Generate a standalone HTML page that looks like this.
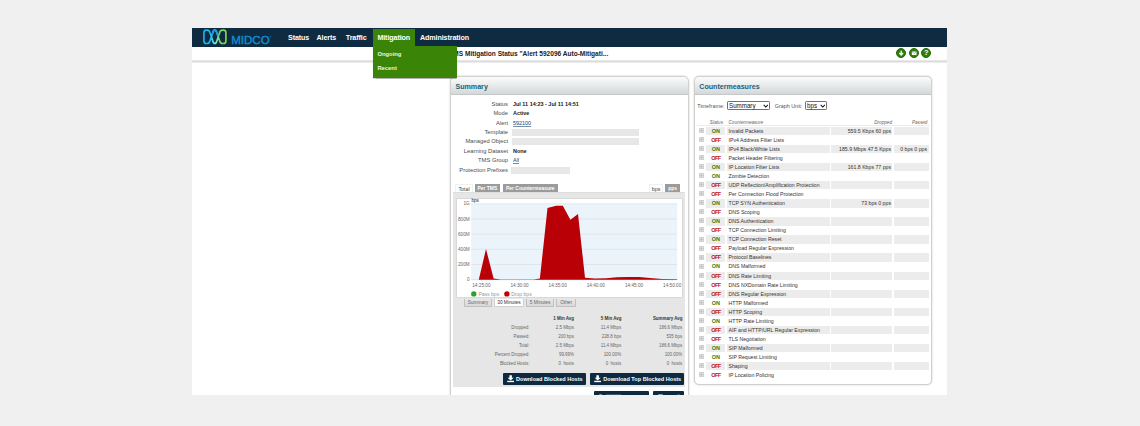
<!DOCTYPE html>
<html><head><meta charset="utf-8"><title>Mitigation Status</title>
<style>
*{box-sizing:border-box;margin:0;padding:0}
html,body{width:1140px;height:426px;overflow:hidden;background:#f0f0f0;font-family:"Liberation Sans",sans-serif;}
div,span,b,i,a{position:absolute;white-space:nowrap;font-style:normal;font-weight:normal}
#page{left:192px;top:28px;width:755px;height:367px;background:#fff}
#clip{left:0;top:0;width:1140px;height:395px;overflow:hidden}
#nav{left:192px;top:28px;width:755px;height:18.7px;background:#0e2b41}
.nv{z-index:6;top:28px;height:18px;line-height:20.2px;color:#fff;font-size:7.15px;font-weight:bold;letter-spacing:-0.1px}
#mit{z-index:5;left:373px;top:29px;width:42px;height:18px;background:#3a8507}
#dd{z-index:5;left:373px;top:46px;width:84px;height:31.5px;background:#3a8507;box-shadow:0 0.5px 1px rgba(0,0,0,.3)}
.ddi{z-index:6;left:377.4px;color:#e8f5e0;font-size:5.85px;font-weight:bold;line-height:8px}
#hr{left:192px;top:60px;width:755px;height:2.5px;background:linear-gradient(#ececec,#dcdcdc 50%,#f4f4f4)}
#title{left:456px;top:47px;height:13px;line-height:13px;font-size:6.55px;font-weight:bold;color:#222}
.ic{top:48.1px;width:10.1px;height:10.1px;border-radius:50%;background:#2f7d0d;border:1px solid #246a06}
.panel{border:1px solid #d0d0d0;border-radius:6px 6px 4px 4px;background:#fff;box-shadow:0 0 2px rgba(0,0,0,.22)}
.ph{left:0;top:0;right:0;height:17.9px;border-radius:5px 5px 0 0;background:linear-gradient(#fbfbfb,#eef0f0 35%,#d4d8d8);border-bottom:1px solid #c4c8c8}
.pt{left:4.5px;top:0;line-height:20.8px;font-size:7.1px;font-weight:bold;color:#1d5f7a}
.lbl{text-align:right;font-size:5.8px;color:#4c4c4c;line-height:9px;height:9px}
.val{left:513px;font-size:5.45px;font-weight:bold;color:#1a1a1a;line-height:9px;height:9px}
.blk{background:#e7e7e7;height:7.2px}
a.lk{color:#17446f;text-decoration:underline;text-decoration-thickness:0.45px;text-decoration-color:rgba(23,68,111,.6);text-underline-offset:0.6px;position:static}
.tab{top:184.4px;height:7.8px;line-height:8px;font-size:4.95px;font-weight:bold;text-align:center;color:#fff;background:#9b9b9b;border:0.5px solid #9b9b9b;border-bottom:none}
.tab.w{background:#fff;color:#444;border-color:#f0f0f0;font-weight:normal;font-size:5.3px}
#garea{left:453px;top:192px;width:231.6px;height:195.3px;background:#e6e6e6;border-top:1px solid #dedede}
#chart{left:456.3px;top:198px;width:226.4px;height:100.3px;background:#fff;border:0.6px solid #d8d8d8;border-radius:1px;overflow:hidden}
.ax{font-size:4.7px;color:#666;line-height:6px;height:6px}
.btn{top:298.6px;height:8.6px;line-height:8.2px;font-size:4.75px;text-align:center;color:#666;background:linear-gradient(#e6e6e6,#dadada);border:0.6px solid #c0c0c0;border-top:none;border-radius:0 0 1px 1px}
.btn.w{background:#fff;color:#333;border-color:#d0d0d0}
.th{margin-top:1px;font-size:4.47px;font-weight:bold;color:#333;text-align:right;line-height:8px;height:8px}
.tl{margin-top:1px;font-size:4.45px;color:#666;text-align:right;line-height:8px;height:8px}
.dbtn{height:11.7px;background:#0e2a40;border-radius:1px;color:#fff;font-size:5.55px;font-weight:bold;line-height:11.7px}
.cl{font-size:5.42px;color:#555;line-height:8px;height:8px}
.sel{border:0.6px solid #707070;border-radius:1.2px;background:#fff;height:8.6px;font-size:6.9px;line-height:7.6px;color:#111}
.sel span{transform:scaleX(0.9);transform-origin:0 0}
.hd{font-size:4.65px;color:#666;font-style:italic;line-height:7px;height:7px}
.st{left:0;width:1140px;height:8.4px}
.st i{top:0;height:8.4px;background:#ececec}
.r{left:0;width:1140px;height:9px;line-height:9px;font-size:5.2px;color:#333}
.pl{position:absolute;left:698.8px;top:1.2px}
.r .s{left:706px;width:19.7px;text-align:center;font-weight:bold;font-size:5.5px}
.r .s.on{color:#2f7d1a}
.r .s.off{color:#b81418;letter-spacing:-0.55px}
.r .n{left:728.5px}
.r .d{right:249px;text-align:right}
.r .p{right:213px;text-align:right}
</style></head><body>
<div id="page"></div>
<svg width="0" height="0" style="position:absolute"><defs><symbol id="plus" viewBox="0 0 5.2 5.2"><rect x="0.4" y="0.4" width="4.4" height="4.4" rx="0.4" fill="#e4e4e4" stroke="#c2c2c2" stroke-width="0.8"/><path d="M2.6 0.9V4.3M0.9 2.6H4.3" stroke="#bcbcbc" stroke-width="0.7" fill="none"/></symbol></defs></svg>
<div id="nav"></div>
<div id="hr"></div>
<div id="mit"></div>
<div id="dd"></div>
<div class="ddi" style="top:50.2px">Ongoing</div>
<div class="ddi" style="top:64px">Recent</div>
<svg style="position:absolute;left:200px;top:28px" width="76" height="18" viewBox="200 28 76 18">
  <defs>
    <linearGradient id="lg1" gradientUnits="userSpaceOnUse" x1="203" x2="227" y1="0" y2="0"><stop offset="0" stop-color="#10b4f2"/><stop offset="0.3" stop-color="#16b8ee"/><stop offset="0.5" stop-color="#86e6e0"/><stop offset="0.7" stop-color="#6fd06a"/><stop offset="1" stop-color="#86d93a"/></linearGradient>
  </defs>
  <g fill="none" stroke-width="1.65" stroke-linejoin="round">
    <path d="M203.900 40.900 V32.600 Q203.900 30.050 206.400 30.050 H207.200 Q209.400 30.050 210 32.800 L212.700 40.700 Q213.300 43.450 214.800 43.450 Q216.300 43.450 216.900 40.700 L219.600 32.800 Q220.200 30.050 222.600 30.050 H223.400 Q225.900 30.050 225.900 32.600 V40.900 Q225.900 43.450 223.400 43.450 H222.600 Q220.200 43.450 219.600 40.700 L216.900 32.800 Q216.300 30.050 214.800 30.050 Q213.300 30.050 212.700 32.800 L210 40.700 Q209.400 43.450 207.200 43.450 H206.400 Q203.900 43.450 203.900 40.900 Z" stroke="url(#lg1)"/>
    <path d="M211.900 35.200 L212.700 32.800 Q213.300 30.050 214.800 30.050 Q216.300 30.050 216.900 32.800 L217.900 35.700" stroke="#1398dc"/>
  </g>
  <text x="231.300" y="44.400" font-family="Liberation Sans, sans-serif" font-size="11.3" fill="#0e8ed0" stroke="#0e8ed0" stroke-width="0.4" textLength="38.300" lengthAdjust="spacingAndGlyphs">MIDCO</text>
  <circle cx="270.600" cy="36.600" r="0.5" fill="#0e8ed0"/>
</svg>
<div class="nv" style="left:288px">Status</div>
<div class="nv" style="left:316.5px">Alerts</div>
<div class="nv" style="left:345.8px">Traffic</div>
<div class="nv" style="left:377.4px">Mitigation</div>
<div class="nv" style="left:420px">Administration</div>
<div id="title" style="left:453.3px">MS Mitigation Status "Alert 592096 Auto-Mitigati...</div>
<div class="ic" style="left:896px"><svg style="position:absolute;left:0;top:0" width="8.4" height="8.4" viewBox="0 0 10 10"><path d="M5 2.2V6.6M2.8 4.8L5 7.2L7.2 4.8" stroke="#fff" stroke-width="1.6" fill="none"/></svg></div>
<div class="ic" style="left:908.6px"><svg style="position:absolute;left:0;top:0" width="8.4" height="8.4" viewBox="0 0 10 10"><rect x="2.2" y="3" width="5.6" height="4.2" fill="#fff"/><path d="M2.2 3.2L5 5.4L7.8 3.2" stroke="#2f7d0d" stroke-width="0.5" fill="none"/></svg></div>
<div class="ic" style="left:921px"><span style="left:0;top:0;width:8.4px;height:8.4px;line-height:8.8px;text-align:center;color:#fff;font-weight:bold;font-size:7.4px">?</span></div>
<div id="clip">
<!-- Summary panel -->
<div class="panel" style="left:450px;top:75.900px;width:238.800px;height:330px"><div class="ph"><div class="pt">Summary</div></div></div>
<!-- Countermeasures panel -->
<div class="panel" style="left:693.600px;top:75.900px;width:238.900px;height:308.700px;border-radius:5px"><div class="ph"><div class="pt" style="left:4.700px">Countermeasures</div></div></div>

<div class="lbl" style="left:440px;width:68px;top:100px">Status</div><div class="val" style="top:100px">Jul 11 14:23 - Jul 11 14:51</div>
<div class="lbl" style="left:440px;width:68px;top:109.2px">Mode</div><div class="val" style="top:109.2px">Active</div>
<div class="lbl" style="left:440px;width:68px;top:118.6px">Alert</div><div class="val" style="top:118.6px"><a class="lk">592100</a></div>
<div class="lbl" style="left:440px;width:68px;top:127.7px">Template</div><div class="blk" style="left:512px;top:128.8px;width:127px"></div>
<div class="lbl" style="left:440px;width:68px;top:137.1px">Managed Object</div><div class="blk" style="left:512px;top:138.2px;width:127px"></div>
<div class="lbl" style="left:440px;width:68px;top:146.6px">Learning Dataset</div><div class="val" style="top:146.6px">None</div>
<div class="lbl" style="left:440px;width:68px;top:156.3px">TMS Group</div><div class="val" style="top:156.3px"><a class="lk">All</a></div>
<div class="lbl" style="left:440px;width:68px;top:165.9px">Protection Prefixes</div><div class="blk" style="left:511.2px;top:166.8px;width:59.2px"></div>

<div id="garea"></div>
<div class="tab w" style="left:455px;width:18px">Total</div>
<div class="tab" style="left:475px;width:24.7px">Per TMS</div>
<div class="tab" style="left:502.8px;width:55px">Per Countermeasure</div>
<div class="tab w" style="left:648.8px;width:14.5px">bps</div>
<div class="tab" style="left:665.3px;width:14.7px">pps</div>

<div id="chart"></div>
<svg style="position:absolute;left:456px;top:198px" width="227" height="100" viewBox="456 198 227 100">
  <rect x="471.2" y="203.4" width="206" height="76.3" fill="#ebf3fb"/>
  <g stroke="#dcdcdc" stroke-width="0.6">
    <line x1="471.2" x2="677.2" y1="203.7" y2="203.7" stroke="#e3e6e8"/>
    <line x1="471.2" x2="677.2" y1="218.9" y2="218.9"/>
    <line x1="471.2" x2="677.2" y1="234.1" y2="234.1"/>
    <line x1="471.2" x2="677.2" y1="249.3" y2="249.3"/>
    <line x1="471.2" x2="677.2" y1="264.5" y2="264.5"/>
    <line x1="471.2" x2="677.2" y1="279.7" y2="279.7" stroke="#ccc"/>
  </g>
  <g stroke="#ccc" stroke-width="0.5">
    <line x1="481.4" x2="481.4" y1="279.7" y2="281.2"/><line x1="519.5" x2="519.5" y1="279.7" y2="281.2"/><line x1="557.7" x2="557.7" y1="279.7" y2="281.2"/><line x1="595.8" x2="595.8" y1="279.7" y2="281.2"/><line x1="634" x2="634" y1="279.7" y2="281.2"/><line x1="672.2" x2="672.2" y1="279.7" y2="281.2"/>
  </g>
  <path fill="#b80006" d="M471.2 279.7 L478.8 279.7 L486 249 L493.6 278.6 L500.5 279.5 L534 279.5 L539.9 278.6 L547.5 208 L556.2 205.8 L562.8 205.7 L570.4 219.7 L578 214 L585 277.8 L595 278.6 L606 278.3 L617 277.3 L628 277 L639 277 L650 277.9 L662 278.9 L677.2 279.2 L677.2 279.7 Z"/>
  <circle cx="473.8" cy="293.9" r="2.7" fill="#2ca02c"/>
  <circle cx="506.9" cy="293.9" r="2.7" fill="#c00008"/>
</svg>
<div class="ax" style="left:471.5px;top:197.9px;color:#222;font-size:4.6px">bps</div>
<div class="ax" style="left:440px;width:29.7px;text-align:right;top:200.6px">1G</div>
<div class="ax" style="left:440px;width:29.7px;text-align:right;top:216.6px">800M</div>
<div class="ax" style="left:440px;width:29.7px;text-align:right;top:231.6px">600M</div>
<div class="ax" style="left:440px;width:29.7px;text-align:right;top:246.6px">400M</div>
<div class="ax" style="left:440px;width:29.7px;text-align:right;top:261.6px">200M</div>
<div class="ax" style="left:440px;width:29.7px;text-align:right;top:276.6px">0</div>
<div class="ax" style="left:461.4px;width:40px;text-align:center;top:282.6px">14:25:00</div>
<div class="ax" style="left:499.5px;width:40px;text-align:center;top:282.6px">14:30:00</div>
<div class="ax" style="left:537.7px;width:40px;text-align:center;top:282.6px">14:35:00</div>
<div class="ax" style="left:575.8px;width:40px;text-align:center;top:282.6px">14:40:00</div>
<div class="ax" style="left:614px;width:40px;text-align:center;top:282.6px">14:45:00</div>
<div style="left:652.2px;top:282.6px;width:30px;height:6px;overflow:hidden"><div class="ax" style="left:0;width:40px;text-align:center;top:0">14:50:00</div></div>
<div class="ax" style="left:478.4px;top:291px;color:#999;font-size:5.05px">Pass bps</div>
<div class="ax" style="left:511.2px;top:291px;color:#999;font-size:5.05px">Drop bps</div>

<div class="btn" style="left:464.3px;width:27.3px">Summary</div>
<div class="btn w" style="left:494px;width:29.8px">30 Minutes</div>
<div class="btn" style="left:526.4px;width:27.2px">5 Minutes</div>
<div class="btn" style="left:556.2px;width:19.8px">Other</div>

<div class="th" style="left:520px;width:54px;top:314px">1 Min Avg</div>
<div class="th" style="left:567px;width:54.5px;top:314px">5 Min Avg</div>
<div class="th" style="left:628px;width:54.5px;top:314px">Summary Avg</div>

<div class="tl" style="left:470px;width:59.5px;top:322.6px">Dropped:</div>
<div class="tl" style="left:470px;width:59.5px;top:331.7px">Passed:</div>
<div class="tl" style="left:470px;width:59.5px;top:340.8px">Total:</div>
<div class="tl" style="left:470px;width:59.5px;top:350px">Percent Dropped:</div>
<div class="tl" style="left:470px;width:59.5px;top:359.1px">Blocked Hosts:</div>

<div class="tl" style="left:520px;width:54px;top:322.6px">2.5 Mbps</div>
<div class="tl" style="left:520px;width:54px;top:331.7px">200 bps</div>
<div class="tl" style="left:520px;width:54px;top:340.8px">2.5 Mbps</div>
<div class="tl" style="left:520px;width:54px;top:350px">99.99%</div>
<div class="tl" style="left:520px;width:54px;top:359.1px">0&nbsp; hosts</div>

<div class="tl" style="left:567px;width:54.2px;top:322.6px">11.4 Mbps</div>
<div class="tl" style="left:567px;width:54.2px;top:331.7px">228.8 bps</div>
<div class="tl" style="left:567px;width:54.2px;top:340.8px">11.4 Mbps</div>
<div class="tl" style="left:567px;width:54.2px;top:350px">100.00%</div>
<div class="tl" style="left:567px;width:54.2px;top:359.1px">0&nbsp; hosts</div>

<div class="tl" style="left:628px;width:54.2px;top:322.6px">186.6 Mbps</div>
<div class="tl" style="left:628px;width:54.2px;top:331.7px">535 bps</div>
<div class="tl" style="left:628px;width:54.2px;top:340.8px">186.6 Mbps</div>
<div class="tl" style="left:628px;width:54.2px;top:350px">100.00%</div>
<div class="tl" style="left:628px;width:54.2px;top:359.1px">0&nbsp; hosts</div>

<div class="dbtn" style="left:502.5px;top:373.3px;width:83.5px"><svg style="position:absolute;left:4.500px;top:2.100px" width="7.300" height="7.300" viewBox="0 0 10 10"><path d="M3.300 0.200h3.400v3.500h2.500L5 7.500 0.800 3.700h2.500z" fill="#fff"/><rect x="0.300" y="7.900" width="9.400" height="1.900" fill="#fff"/></svg><span style="left:13.5px;top:1px;font-weight:bold">Download Blocked Hosts</span></div>
<div class="dbtn" style="left:589.8px;top:373.3px;width:94.2px"><svg style="position:absolute;left:4.500px;top:2.100px" width="7.300" height="7.300" viewBox="0 0 10 10"><path d="M3.300 0.200h3.400v3.500h2.500L5 7.500 0.800 3.700h2.500z" fill="#fff"/><rect x="0.300" y="7.900" width="9.400" height="1.900" fill="#fff"/></svg><span style="left:13.5px;top:1px;font-weight:bold">Download Top Blocked Hosts</span></div>
<div class="dbtn" style="left:594px;top:391px;width:54.7px"><span style="left:13px;top:0.8px;font-weight:bold">Add Comment</span></div>
<div class="dbtn" style="left:653.2px;top:391px;width:30.800px"><span style="left:7px;top:0.8px;font-weight:bold">Stop</span></div>

<div style="left:598.800px;top:394.100px;width:3.500px;height:0.900px;background:#8fa0ad;border-radius:1px 1px 0 0"></div>
<div style="left:605.800px;top:394.400px;width:15px;height:0.600px;background:#3d5568"></div>
<div style="left:658.400px;top:394.100px;width:4.400px;height:0.900px;background:#8fa0ad;border-radius:1px 1px 0 0"></div>
<div style="left:676.800px;top:394.400px;width:3.400px;height:0.600px;background:#3d5568"></div>
<!-- CM controls -->
<div class="cl" style="left:697.3px;top:101.6px">Timeframe:</div>
<div class="sel" style="left:727.1px;top:101.2px;width:42.7px"><span style="left:1.2px;top:0">Summary</span><svg style="position:absolute;left:34.5px;top:2.200px" width="5.6" height="4" viewBox="0 0 8 5"><path d="M1 1L4 4L7 1" stroke="#111" stroke-width="1.5" fill="none"/></svg></div>
<div class="cl" style="left:774.7px;top:101.6px">Graph Unit:</div>
<div class="sel" style="left:804.5px;top:101.2px;width:22.3px"><span style="left:1.2px;top:0">bps</span><svg style="position:absolute;left:14.2px;top:2.200px" width="5.6" height="4" viewBox="0 0 8 5"><path d="M1 1L4 4L7 1" stroke="#111" stroke-width="1.5" fill="none"/></svg></div>
<div style="left:697px;top:125.3px;width:233px;height:0.7px;background:#ebebeb"></div>
<div class="hd" style="left:709.8px;top:118.5px">Status</div>
<div class="hd" style="left:728.5px;top:118.5px">Countermeasure</div>
<div class="hd" style="right:248px;top:118.5px">Dropped</div>
<div class="hd" style="right:212.6px;top:118.5px">Passed</div>
</div>
<!-- countermeasure rows -->
<div class="st" style="top:126.70px"><i style="left:706px;width:19px"></i><i style="left:726.6px;width:103.2px"></i><i style="left:831px;width:61.3px"></i><i style="left:893.8px;width:35.7px"></i><svg class="pl" width="5.2" height="5.2" viewBox="0 0 5.2 5.2"><use href="#plus"/></svg></div>
<div class="r" style="top:126.60px"><span class="s on">ON</span><span class="n">Invalid Packets</span><span class="d">559.5 Kbps 60 pps</span></div>
<div class="st" style="top:135.75px"><svg class="pl" width="5.2" height="5.2" viewBox="0 0 5.2 5.2"><use href="#plus"/></svg></div>
<div class="r" style="top:135.60px"><span class="s off">OFF</span><span class="n">IPv4 Address Filter Lists</span></div>
<div class="st" style="top:144.80px"><i style="left:706px;width:19px"></i><i style="left:726.6px;width:103.2px"></i><i style="left:831px;width:61.3px"></i><i style="left:893.8px;width:35.7px"></i><svg class="pl" width="5.2" height="5.2" viewBox="0 0 5.2 5.2"><use href="#plus"/></svg></div>
<div class="r" style="top:144.60px"><span class="s on">ON</span><span class="n">IPv4 Black/White Lists</span><span class="d">185.9 Mbps 47.5 Kpps</span><span class="p">0 bps 0 pps</span></div>
<div class="st" style="top:153.86px"><svg class="pl" width="5.2" height="5.2" viewBox="0 0 5.2 5.2"><use href="#plus"/></svg></div>
<div class="r" style="top:153.60px"><span class="s off">OFF</span><span class="n">Packet Header Filtering</span></div>
<div class="st" style="top:162.91px"><i style="left:706px;width:19px"></i><i style="left:726.6px;width:103.2px"></i><i style="left:831px;width:61.3px"></i><i style="left:893.8px;width:35.7px"></i><svg class="pl" width="5.2" height="5.2" viewBox="0 0 5.2 5.2"><use href="#plus"/></svg></div>
<div class="r" style="top:162.60px"><span class="s on">ON</span><span class="n">IP Location Filter Lists</span><span class="d">161.8 Kbps 77 pps</span></div>
<div class="st" style="top:171.96px"><svg class="pl" width="5.2" height="5.2" viewBox="0 0 5.2 5.2"><use href="#plus"/></svg></div>
<div class="r" style="top:171.60px"><span class="s on">ON</span><span class="n">Zombie Detection</span></div>
<div class="st" style="top:181.01px"><i style="left:706px;width:19px"></i><i style="left:726.6px;width:103.2px"></i><i style="left:831px;width:61.3px"></i><i style="left:893.8px;width:35.7px"></i><svg class="pl" width="5.2" height="5.2" viewBox="0 0 5.2 5.2"><use href="#plus"/></svg></div>
<div class="r" style="top:180.60px"><span class="s off">OFF</span><span class="n">UDP Reflection/Amplification Protection</span></div>
<div class="st" style="top:190.06px"><svg class="pl" width="5.2" height="5.2" viewBox="0 0 5.2 5.2"><use href="#plus"/></svg></div>
<div class="r" style="top:189.60px"><span class="s off">OFF</span><span class="n">Per Connection Flood Protection</span></div>
<div class="st" style="top:199.12px"><i style="left:706px;width:19px"></i><i style="left:726.6px;width:103.2px"></i><i style="left:831px;width:61.3px"></i><i style="left:893.8px;width:35.7px"></i><svg class="pl" width="5.2" height="5.2" viewBox="0 0 5.2 5.2"><use href="#plus"/></svg></div>
<div class="r" style="top:198.60px"><span class="s on">ON</span><span class="n">TCP SYN Authentication</span><span class="d">73 bps 0 pps</span></div>
<div class="st" style="top:208.17px"><svg class="pl" width="5.2" height="5.2" viewBox="0 0 5.2 5.2"><use href="#plus"/></svg></div>
<div class="r" style="top:207.60px"><span class="s off">OFF</span><span class="n">DNS Scoping</span></div>
<div class="st" style="top:217.22px"><i style="left:706px;width:19px"></i><i style="left:726.6px;width:103.2px"></i><i style="left:831px;width:61.3px"></i><i style="left:893.8px;width:35.7px"></i><svg class="pl" width="5.2" height="5.2" viewBox="0 0 5.2 5.2"><use href="#plus"/></svg></div>
<div class="r" style="top:216.60px"><span class="s on">ON</span><span class="n">DNS Authentication</span></div>
<div class="st" style="top:226.27px"><svg class="pl" width="5.2" height="5.2" viewBox="0 0 5.2 5.2"><use href="#plus"/></svg></div>
<div class="r" style="top:225.60px"><span class="s off">OFF</span><span class="n">TCP Connection Limiting</span></div>
<div class="st" style="top:235.32px"><i style="left:706px;width:19px"></i><i style="left:726.6px;width:103.2px"></i><i style="left:831px;width:61.3px"></i><i style="left:893.8px;width:35.7px"></i><svg class="pl" width="5.2" height="5.2" viewBox="0 0 5.2 5.2"><use href="#plus"/></svg></div>
<div class="r" style="top:234.60px"><span class="s on">ON</span><span class="n">TCP Connection Reset</span></div>
<div class="st" style="top:244.38px"><svg class="pl" width="5.2" height="5.2" viewBox="0 0 5.2 5.2"><use href="#plus"/></svg></div>
<div class="r" style="top:243.60px"><span class="s off">OFF</span><span class="n">Payload Regular Expression</span></div>
<div class="st" style="top:253.43px"><i style="left:706px;width:19px"></i><i style="left:726.6px;width:103.2px"></i><i style="left:831px;width:61.3px"></i><i style="left:893.8px;width:35.7px"></i><svg class="pl" width="5.2" height="5.2" viewBox="0 0 5.2 5.2"><use href="#plus"/></svg></div>
<div class="r" style="top:252.60px"><span class="s off">OFF</span><span class="n">Protocol Baselines</span></div>
<div class="st" style="top:262.48px"><svg class="pl" width="5.2" height="5.2" viewBox="0 0 5.2 5.2"><use href="#plus"/></svg></div>
<div class="r" style="top:261.60px"><span class="s on">ON</span><span class="n">DNS Malformed</span></div>
<div class="st" style="top:271.53px"><i style="left:706px;width:19px"></i><i style="left:726.6px;width:103.2px"></i><i style="left:831px;width:61.3px"></i><i style="left:893.8px;width:35.7px"></i><svg class="pl" width="5.2" height="5.2" viewBox="0 0 5.2 5.2"><use href="#plus"/></svg></div>
<div class="r" style="top:271.60px"><span class="s off">OFF</span><span class="n">DNS Rate Limiting</span></div>
<div class="st" style="top:280.58px"><svg class="pl" width="5.2" height="5.2" viewBox="0 0 5.2 5.2"><use href="#plus"/></svg></div>
<div class="r" style="top:280.60px"><span class="s off">OFF</span><span class="n">DNS NXDomain Rate Limiting</span></div>
<div class="st" style="top:289.64px"><i style="left:706px;width:19px"></i><i style="left:726.6px;width:103.2px"></i><i style="left:831px;width:61.3px"></i><i style="left:893.8px;width:35.7px"></i><svg class="pl" width="5.2" height="5.2" viewBox="0 0 5.2 5.2"><use href="#plus"/></svg></div>
<div class="r" style="top:289.60px"><span class="s off">OFF</span><span class="n">DNS Regular Expression</span></div>
<div class="st" style="top:298.69px"><svg class="pl" width="5.2" height="5.2" viewBox="0 0 5.2 5.2"><use href="#plus"/></svg></div>
<div class="r" style="top:298.60px"><span class="s on">ON</span><span class="n">HTTP Malformed</span></div>
<div class="st" style="top:307.74px"><i style="left:706px;width:19px"></i><i style="left:726.6px;width:103.2px"></i><i style="left:831px;width:61.3px"></i><i style="left:893.8px;width:35.7px"></i><svg class="pl" width="5.2" height="5.2" viewBox="0 0 5.2 5.2"><use href="#plus"/></svg></div>
<div class="r" style="top:307.60px"><span class="s off">OFF</span><span class="n">HTTP Scoping</span></div>
<div class="st" style="top:316.79px"><svg class="pl" width="5.2" height="5.2" viewBox="0 0 5.2 5.2"><use href="#plus"/></svg></div>
<div class="r" style="top:316.60px"><span class="s on">ON</span><span class="n">HTTP Rate Limiting</span></div>
<div class="st" style="top:325.84px"><i style="left:706px;width:19px"></i><i style="left:726.6px;width:103.2px"></i><i style="left:831px;width:61.3px"></i><i style="left:893.8px;width:35.7px"></i><svg class="pl" width="5.2" height="5.2" viewBox="0 0 5.2 5.2"><use href="#plus"/></svg></div>
<div class="r" style="top:325.60px"><span class="s off">OFF</span><span class="n">AIF and HTTP/URL Regular Expression</span></div>
<div class="st" style="top:334.90px"><svg class="pl" width="5.2" height="5.2" viewBox="0 0 5.2 5.2"><use href="#plus"/></svg></div>
<div class="r" style="top:334.60px"><span class="s off">OFF</span><span class="n">TLS Negotiation</span></div>
<div class="st" style="top:343.95px"><i style="left:706px;width:19px"></i><i style="left:726.6px;width:103.2px"></i><i style="left:831px;width:61.3px"></i><i style="left:893.8px;width:35.7px"></i><svg class="pl" width="5.2" height="5.2" viewBox="0 0 5.2 5.2"><use href="#plus"/></svg></div>
<div class="r" style="top:343.60px"><span class="s on">ON</span><span class="n">SIP Malformed</span></div>
<div class="st" style="top:353.00px"><svg class="pl" width="5.2" height="5.2" viewBox="0 0 5.2 5.2"><use href="#plus"/></svg></div>
<div class="r" style="top:352.60px"><span class="s on">ON</span><span class="n">SIP Request Limiting</span></div>
<div class="st" style="top:362.05px"><i style="left:706px;width:19px"></i><i style="left:726.6px;width:103.2px"></i><i style="left:831px;width:61.3px"></i><i style="left:893.8px;width:35.7px"></i><svg class="pl" width="5.2" height="5.2" viewBox="0 0 5.2 5.2"><use href="#plus"/></svg></div>
<div class="r" style="top:361.60px"><span class="s off">OFF</span><span class="n">Shaping</span></div>
<div class="st" style="top:371.10px"><svg class="pl" width="5.2" height="5.2" viewBox="0 0 5.2 5.2"><use href="#plus"/></svg></div>
<div class="r" style="top:370.60px"><span class="s off">OFF</span><span class="n">IP Location Policing</span></div>
</body></html>
